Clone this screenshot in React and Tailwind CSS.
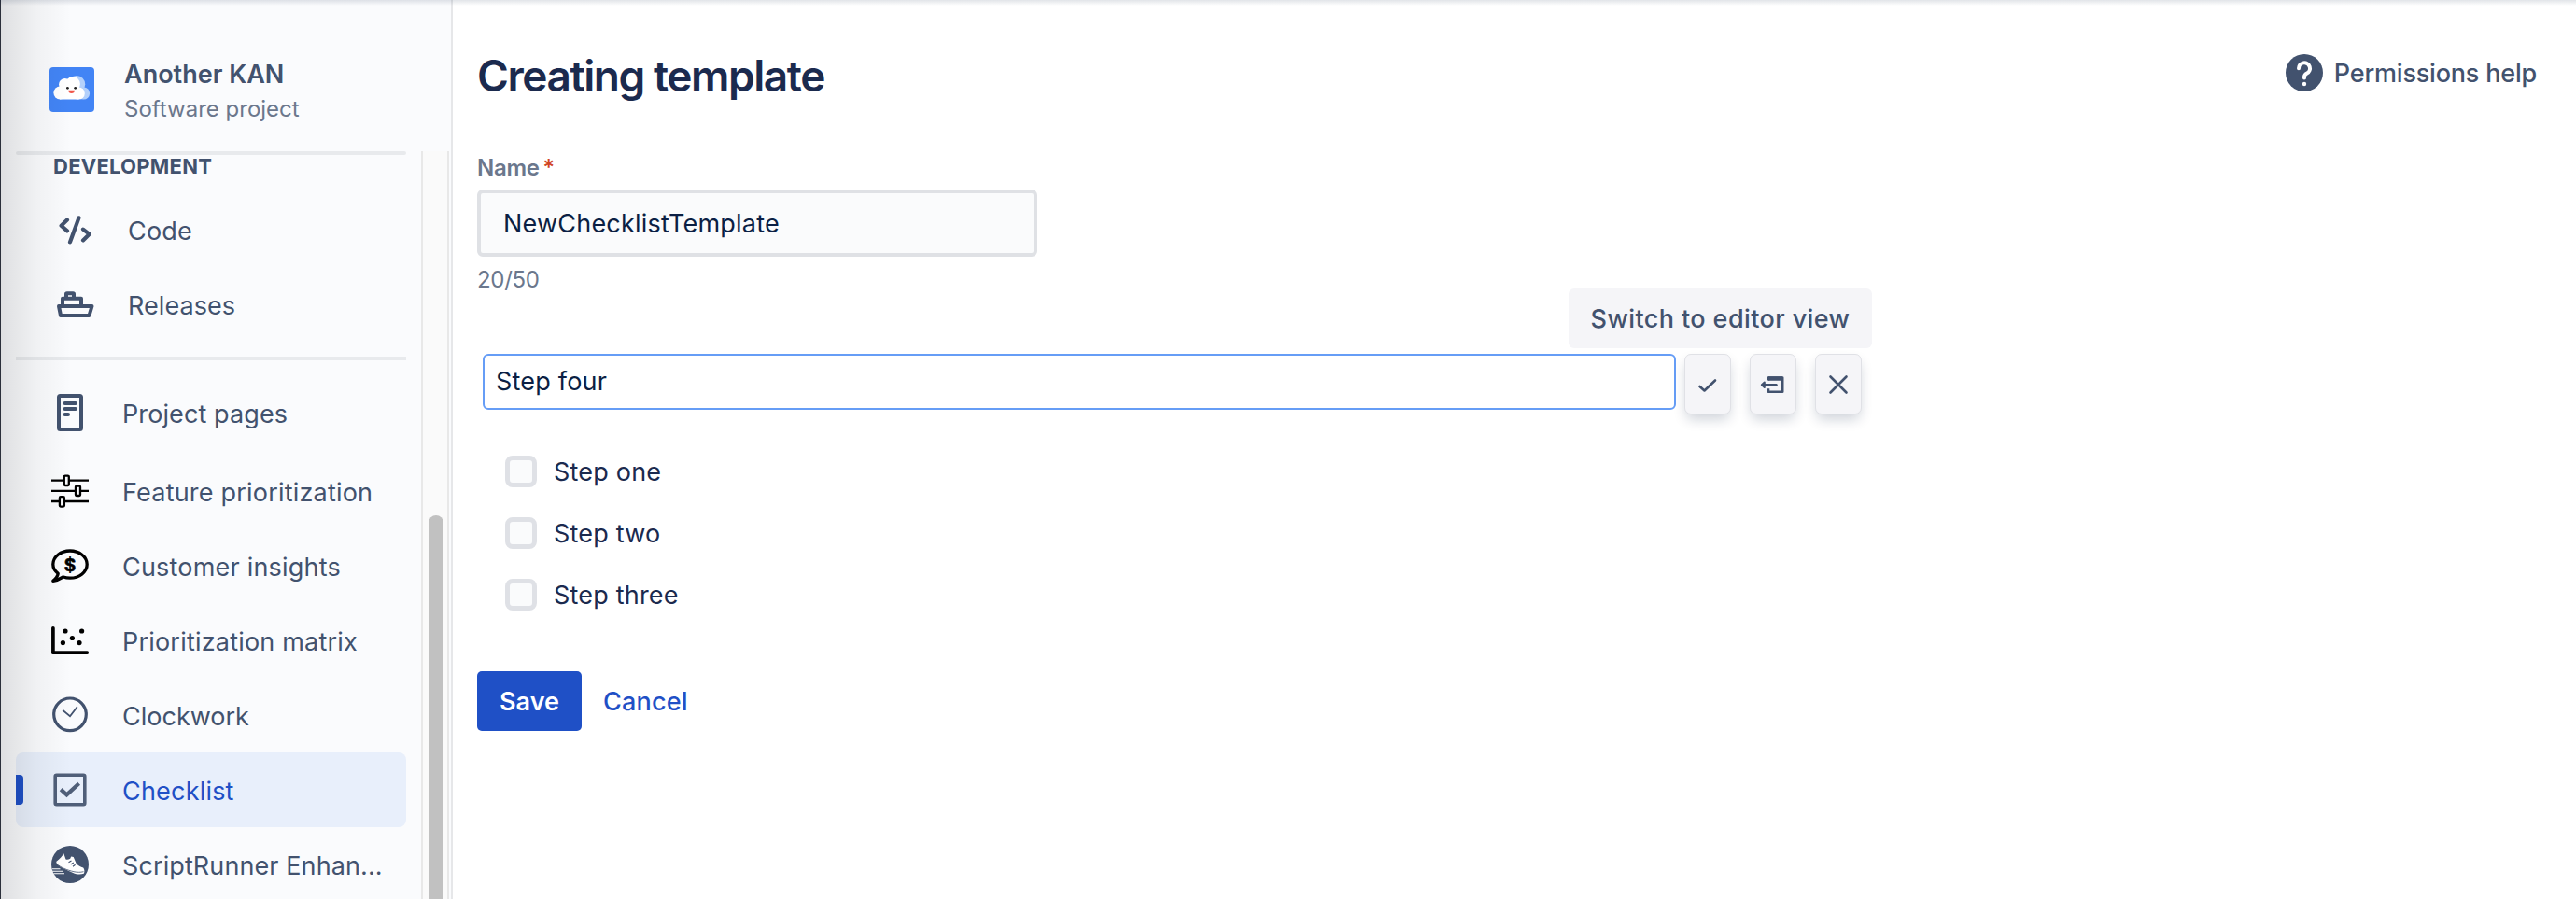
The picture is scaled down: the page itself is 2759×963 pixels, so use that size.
import { clsx } from 'clsx';

const CodeIcon = () => (
  <svg viewBox="0 0 40 40" className="size-10 overflow-visible" fill="none" stroke="currentColor" strokeWidth="4.2" strokeLinecap="round" strokeLinejoin="round">
    <path d="M12 9.6 5.6 15.7 12 21.4M24.5 7.3 15 33.4M29 19.6 35.8 24.8 29 31.4" />
  </svg>
);

const ShipIcon = () => (
  <svg viewBox="0 0 40 40" className="size-10 overflow-visible" fill="none" stroke="currentColor" strokeWidth="4" strokeLinejoin="round">
    <path d="M3 22H38.5L35.5 32H5L3 22zM7 22V13.7H27V22M11 13.7V9q0-.8.8-.8h6.4q.8 0 .8.8v4.7" />
  </svg>
);

const PageIcon = () => (
  <svg viewBox="0 0 40 40" className="size-10" fill="none" stroke="currentColor" strokeWidth="4" strokeLinecap="round">
    <rect x="8" y="2" width="24" height="36" rx="1.5" />
    <path d="M14.500 10H26M14.500 16H26M14.500 22H18" />
  </svg>
);

const SlidersIcon = () => (
  <svg viewBox="0 0 40 40" className="size-10 text-black" fill="none" stroke="currentColor" strokeWidth="2.3">
    <path d="M0 8.6H13.5M19 8.6H40M0 19.8H25.5M31 19.8H40M0 31H8.5M14 31H40" />
    <rect x="13.8" y="3.6" width="5" height="10.4" rx="1" />
    <rect x="26" y="14.6" width="5" height="10.4" rx="1" />
    <rect x="8.9" y="26.2" width="5" height="10.4" rx="1" />
  </svg>
);

const InsightsIcon = () => (
  <svg viewBox="0 0 40 40" className="size-10 text-black" fill="none" stroke="currentColor" strokeWidth="3.3" strokeLinejoin="round">
    <path d="M7.2 28.4C3.8 25.8 1.8 22.4 1.8 18.6 1.8 10.500 9.9 4 20 4s18.200 6.500 18.200 14.600S30.100 33.200 20 33.200c-2.700 0-5-.4-7.300-1.200C9.500 34 6 35.800 1.800 36.300c2.600-2.300 5-5 5.400-7.900z" />
    <text x="20" y="25.500" textAnchor="middle" className="font-bold text-[19px]" fill="currentColor" stroke="currentColor" strokeWidth=".6">$</text>
  </svg>
);

const MatrixIcon = () => (
  <svg viewBox="0 0 40 40" className="size-10 text-black" fill="currentColor">
    <path d="M1.9 6.8V33.200H38.200" fill="none" stroke="currentColor" strokeWidth="3.7" strokeLinecap="round" strokeLinejoin="round" />
    <circle cx="15" cy="10" r="2.6" />
    <circle cx="32.6" cy="10" r="2.6" />
    <circle cx="22.4" cy="17.500" r="2.6" />
    <circle cx="12.400" cy="22.600" r="2.6" />
    <circle cx="30" cy="22.600" r="2.6" />
  </svg>
);

const ClockIcon = () => (
  <svg viewBox="0 0 40 40" className="size-10" fill="none" stroke="currentColor">
    <circle cx="20" cy="19.300" r="17.300" strokeWidth="3.200" />
    <path d="M12.200 14.800 20 21.300 27.700 11.300" strokeWidth="1.800" />
  </svg>
);

const ChecklistIcon = () => (
  <svg viewBox="0 0 40 40" className="size-10 text-[#505f79]" fill="none" stroke="currentColor">
    <rect x="4.200" y="4.200" width="31.600" height="31.600" rx="1.500" strokeWidth="3.600" />
    <path d="M10.200 19.600 16.500 25.400 29.600 13.200" strokeWidth="4.200" />
  </svg>
);

const ShoeIcon = () => (
  <svg viewBox="0 0 40 40" className="size-10">
    <circle cx="20" cy="20" r="20" fill="#42526e" />
    <path d="M13.300 8.300C12 11 9 14 5.200 17c.3 3 3 5 6 6.500l12 5.500c4 1.800 8 2 11.600.8 1-2 .8-4.500-.6-6.300-3-1-5.500-2.500-7.500-4.500l-3-7-2.500-.5-1 2.300c-1.500 1-3 1.300-4.700.8L13.300 8.300z" fill="#fff" />
    <path d="M6 19.500c4 4 11 6.500 18 8.200 4 .8 7 .8 10.500 0" fill="none" stroke="#42526e" strokeWidth=".8" />
    <path d="M18.500 17.800l3-1.800M20.800 20l3-2M23 22.300l2.600-2" stroke="#42526e" strokeWidth="1.100" />
    <path d="M.8 24.700H9.500M1 27.200H13M2.500 29.700H14" stroke="#fff" strokeWidth="1.100" />
  </svg>
);

const CloudAvatar = () => (
  <svg viewBox="0 0 48 48" className="size-12 shrink-0">
    <rect width="48" height="48" rx="4" fill="#4284f5" />
    <g fill="#b3d0fb">
      <circle cx="29" cy="18.200" r="9.200" />
      <circle cx="36.500" cy="28" r="6.600" />
    </g>
    <g fill="#fff">
      <circle cx="11.400" cy="27.500" r="7" />
      <circle cx="16.500" cy="18.500" r="6.500" />
      <circle cx="25" cy="18" r="7.900" />
      <circle cx="31.200" cy="28" r="6.600" />
      <rect x="11" y="19" width="20.500" height="15.500" />
    </g>
    <circle cx="19.400" cy="22.300" r="1.400" fill="#222" />
    <circle cx="27.700" cy="22.300" r="1.400" fill="#222" />
    <path d="M20.300 24.800h6.600a3.300 3.300 0 0 1-6.600 0z" fill="#f0564a" />
  </svg>
);

const HelpIcon = () => (
  <svg viewBox="0 0 40 40" className="size-10">
    <circle cx="20" cy="20" r="20" fill="currentColor" />
    <path d="M14 15.300a6 6 0 1 1 8.800 5.300c-1.900 1-2.800 2-2.800 4v1" fill="none" stroke="#fff" strokeWidth="4" strokeLinecap="round" />
    <circle cx="20" cy="32" r="2.200" fill="#fff" />
  </svg>
);

const productLinks = [
  { label: 'Feature prioritization', icon: SlidersIcon },
  { label: 'Customer insights', icon: InsightsIcon },
  { label: 'Prioritization matrix', icon: MatrixIcon },
  { label: 'Clockwork', icon: ClockIcon, text: 'tracking-normal' },
  { label: 'Checklist', icon: ChecklistIcon, active: true },
  { label: 'ScriptRunner Enhan...', icon: ShoeIcon, text: 'tracking-[0.1px]' },
];

const steps = ['Step one', 'Step two', 'Step three'];

function NavItem({ label, icon: Icon, text, active, nested }) {
  return (
    <a
      className={clsx(
        'relative flex h-20 w-[418px] shrink-0 items-center overflow-hidden rounded-lg',
        nested ? 'gap-[37px] pl-[43px]' : 'gap-9 pl-[38px]',
        active && 'bg-[#e8effb]'
      )}
    >
      {active && <span className="absolute left-0 top-6 h-8 w-2 rounded-r bg-[#1f50c6]" />}
      <Icon />
      <span className={clsx('whitespace-nowrap pt-1', text, active && 'text-[#1f50c6]')}>{label}</span>
    </a>
  );
}

function Sidebar() {
  return (
    <aside className="relative flex w-[485px] shrink-0 flex-col border-r-2 border-[#e6e7e9] bg-[#fafbfd] text-[#42526e]">
      <div className="flex h-[162px] shrink-0 gap-8 pl-[53px] pt-[72px]">
        <CloudAvatar />
        <div className="-mt-[11px] flex flex-col whitespace-nowrap">
          <span className="text-[27px] font-semibold leading-[38px] tracking-normal">Another KAN</span>
          <span className="text-[24px] leading-9 tracking-normal text-[#6b778c]">Software project</span>
        </div>
      </div>
      <div className="flex min-h-0 flex-1 justify-between">
        <nav className="flex flex-col overflow-hidden pl-[17px]">
          <div className="h-1 w-[418px] shrink-0 rounded-sm bg-[#e8eaed]" />
          <h2 className="h-10 shrink-0 pl-10 text-[22px] font-bold leading-[25px] tracking-[0.25px]">DEVELOPMENT</h2>
          <NavItem label="Code" icon={CodeIcon} nested />
          <NavItem label="Releases" icon={ShipIcon} text="tracking-[0.05px]" nested />
          <div className="mb-4 mt-4 h-1 w-[418px] shrink-0 bg-[#e8eaed]" />
          <div className="mb-1">
            <NavItem label="Project pages" icon={PageIcon} text="tracking-[0.1px]" />
          </div>
          {productLinks.map((link) => (
            <NavItem key={link.label} {...link} />
          ))}
        </nav>
        <div className="mr-0.5 flex w-[30px] flex-col items-center border-x-2 border-[#e8e8e8] bg-[#fafafa] pl-0.5 pt-[390px]">
          <div className="w-4 flex-1 rounded-t-lg bg-[#c1c1c1]" />
        </div>
      </div>
      <div className="absolute inset-y-0 left-0 w-[76px] border-l border-[#2b2f3a] bg-linear-to-r from-black/11 via-black/4 to-transparent" />
    </aside>
  );
}

function ActionButton({ label, children }) {
  return (
    <button
      aria-label={label}
      className="flex h-[65px] w-[50px] items-center justify-center rounded-[7px] border border-[#e0e1e6] bg-[#f5f5f8] text-[#42526e] shadow-[0_7px_14px_-2px_rgba(9,30,66,0.2)]"
    >
      {children}
    </button>
  );
}

function EditorSwitch() {
  return (
    <div className="relative">
      <ActionButton label="Switch to editor view">
        <svg viewBox="0 0 50 65" className="h-[65px] w-[50px] shrink-0" fill="none" stroke="currentColor">
          <path d="M20 28.500V25.500H35.200V40.700H20V37.200" strokeWidth="2.600" strokeLinejoin="round" />
          <path d="M20 26.500H35" strokeWidth="4.500" strokeLinejoin="round" />
          <path d="M14 33.200H28.500" strokeWidth="2.400" strokeLinecap="round" />
          <path d="M15.800 30.500 12.800 33.200 15.800 36z" strokeWidth="2" strokeLinejoin="round" fill="currentColor" />
        </svg>
      </ActionButton>
      <div className="absolute -top-[70px] right-[-81px] flex h-16 w-[325px] items-center justify-center whitespace-nowrap rounded-md bg-[#f5f5f8] pt-0.5 text-[27px] font-medium tracking-[0.4px] text-[#42526e]">
        Switch to editor view
      </div>
    </div>
  );
}

function TemplateForm() {
  return (
    <main className="flex flex-1 flex-col bg-white pl-[26px]">
      <header className="flex h-[162px] items-start justify-between pr-[42px]">
        <h1 className="pt-[51px] text-[46px] font-semibold leading-[60px] tracking-[-1.45px] text-[#1b2a4e]">Creating template</h1>
        <a className="mt-[58px] flex h-10 items-center gap-3 font-medium text-[#42526e]">
          <HelpIcon />
          <span className="pt-0.5 tracking-[-0.2px]">Permissions help</span>
        </a>
      </header>

      <label className="h-[41px] text-[24px] font-semibold leading-9 tracking-[-0.3px] text-[#6b778c]">
        Name <span className="-ml-0.5 text-[#d04424]">*</span>
      </label>
      <div className="flex h-[72px] w-[600px] items-center rounded-md border-4 border-[#dfe1e5] bg-[#fafbfc] pl-6 pt-[3px] text-[#0b1f44]">
        NewChecklistTemplate
      </div>
      <span className="h-[104px] pt-[7px] text-[24px] leading-9 tracking-[-0.3px] text-[#6b778c]">20/50</span>

      <div className="flex h-[65px] items-start pl-1.5">
        <div className="flex h-[60px] w-[1278px] items-center rounded-md border-2 border-[#669df6] pl-3 pt-px text-[#0b1f44]">Step four</div>
        <div className="ml-[9px] flex gap-5">
          <ActionButton label="Confirm">
            <svg viewBox="0 0 50 65" className="h-[65px] w-[50px] shrink-0" fill="none" stroke="currentColor" strokeWidth="2.600" strokeLinecap="round" strokeLinejoin="round">
              <path d="M16.500 35 21.500 39.500 33 28.500" />
            </svg>
          </ActionButton>
          <EditorSwitch />
          <ActionButton label="Close">
            <svg viewBox="0 0 50 65" className="h-[65px] w-[50px] shrink-0" fill="none" stroke="currentColor" strokeWidth="2.600" strokeLinecap="round">
              <path d="M16.500 24.500 33.500 41.500M33.500 24.500 16.500 41.500" />
            </svg>
          </ActionButton>
        </div>
      </div>

      <ul className="pl-[30px] pt-7">
        {steps.map((step) => (
          <li key={step} className="flex h-[66px] items-center gap-[18px] text-[#1b2a4e]">
            <span className="size-[34px] rounded-lg border-[5px] border-[#dfe1e6] bg-[#fafbfc]" />
            <span className="pt-0.5">{step}</span>
          </li>
        ))}
      </ul>

      <div className="mt-[49px] flex h-16 items-center gap-[23px] font-medium">
        <button className="flex h-16 w-28 items-center justify-center rounded-[5px] bg-[#1f50c6] pt-0.5 font-semibold tracking-normal text-white">Save</button>
        <button className="pt-0.5 text-[#1f50c6]">Cancel</button>
      </div>
    </main>
  );
}

export default function App() {
  return (
    <div className="relative flex h-[963px] w-[2759px] overflow-hidden bg-white font-['Inter',sans-serif] text-[27px] tracking-[0.2px]">
      <Sidebar />
      <TemplateForm />
      <div className="absolute inset-x-0 top-0 h-1.5 bg-linear-to-b from-[#091e42]/12 to-transparent" />
    </div>
  );
}
